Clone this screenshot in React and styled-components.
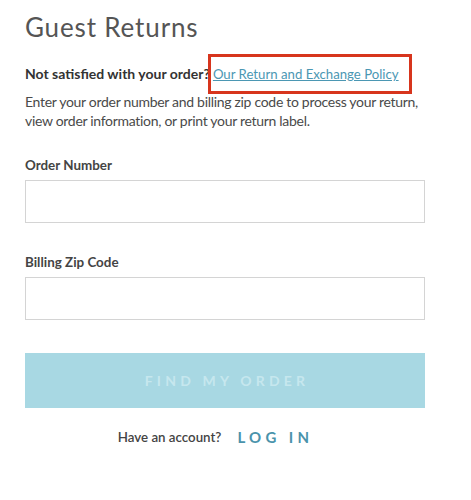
import React from "react";
import styled, { createGlobalStyle } from "styled-components";

const GlobalStyle = createGlobalStyle`
  body {
    margin: 0;
    background: #ffffff;
    font-family: Lato, "Liberation Sans", sans-serif;
    color: #4a4a4a;
  }
`;

const Page = styled.div`
  width: 400px;
  padding: 12px 25px 0 25px;
`;

const Title = styled.h1`
  margin: 0;
  font-family: Lato, sans-serif;
  font-weight: 400;
  font-size: 26px;
  line-height: 30px;
  letter-spacing: 0.85px;
  color: #555555;
`;

const Notice = styled.p`
  margin: 22px 0 0 0;
  font-size: 14px;
  font-weight: 700;
  line-height: 20px;
  color: #333333;
`;

// the red frame is an annotation drawn over the link
const PolicyLink = styled.a`
  position: relative;
  margin-left: 3px;
  font-weight: 400;
  font-size: 13.2px;
  color: #4b97b3;
  text-decoration: underline;

  &::after {
    content: "";
    position: absolute;
    left: -5px;
    right: -13px;
    top: -12px;
    bottom: -12px;
    border: 3px solid #d7351d;
  }
`;

const Intro = styled.p`
  margin: 8px 0 0 0;
  font-size: 14px;
  line-height: 19px;
  letter-spacing: -0.3px;
  color: #4a4a4a;
`;

const Field = styled.div`
  display: flex;
  flex-direction: column;
  margin-top: ${(p) => p.$top}px;
`;

const Label = styled.label`
  font-size: 13.4px;
  font-weight: 700;
  line-height: 18px;
  color: #444444;
  margin-bottom: 6px;
`;

const Input = styled.input`
  box-sizing: border-box;
  width: 400px;
  height: 43px;
  border: 1px solid #d4d4d4;
  padding: 0 10px;
  font-size: 14px;
  outline: none;
`;

const SubmitButton = styled.button`
  display: flex;
  align-items: center;
  justify-content: center;
  width: 400px;
  height: 55px;
  margin-top: 33px;
  padding: 0 0 0 4px;
  border: none;
  background: #a8d8e3;
  color: #c6e7ee;
  font-family: Lato, sans-serif;
  font-weight: 700;
  font-size: 14px;
  letter-spacing: 4.2px;
`;

const AccountRow = styled.div`
  display: flex;
  justify-content: center;
  align-items: center;
  gap: 16px;
  margin-top: 20px;
  padding-right: 19px;
`;

const AccountText = styled.span`
  font-size: 13.3px;
  font-weight: 600;
  color: #444444;
`;

const LoginLink = styled.a`
  font-size: 15px;
  font-weight: 700;
  letter-spacing: 4.3px;
  color: #4a93ab;
  text-decoration: none;
`;

export default function App() {
  return (
    <>
      <GlobalStyle />
      <Page>
        <Title>Guest Returns</Title>
        <Notice>
          Not satisfied with your order?
          <PolicyLink href="#">Our Return and Exchange Policy</PolicyLink>
        </Notice>
        <Intro>
          Enter your order number and billing zip code to process your return,
          view order information, or print your return label.
        </Intro>
        <Field $top={26}>
          <Label>Order Number</Label>
          <Input type="text" />
        </Field>
        <Field $top={30}>
          <Label>Billing Zip Code</Label>
          <Input type="text" />
        </Field>
        <SubmitButton>FIND MY ORDER</SubmitButton>
        <AccountRow>
          <AccountText>Have an account?</AccountText>
          <LoginLink href="#">LOG IN</LoginLink>
        </AccountRow>
      </Page>
    </>
  );
}
